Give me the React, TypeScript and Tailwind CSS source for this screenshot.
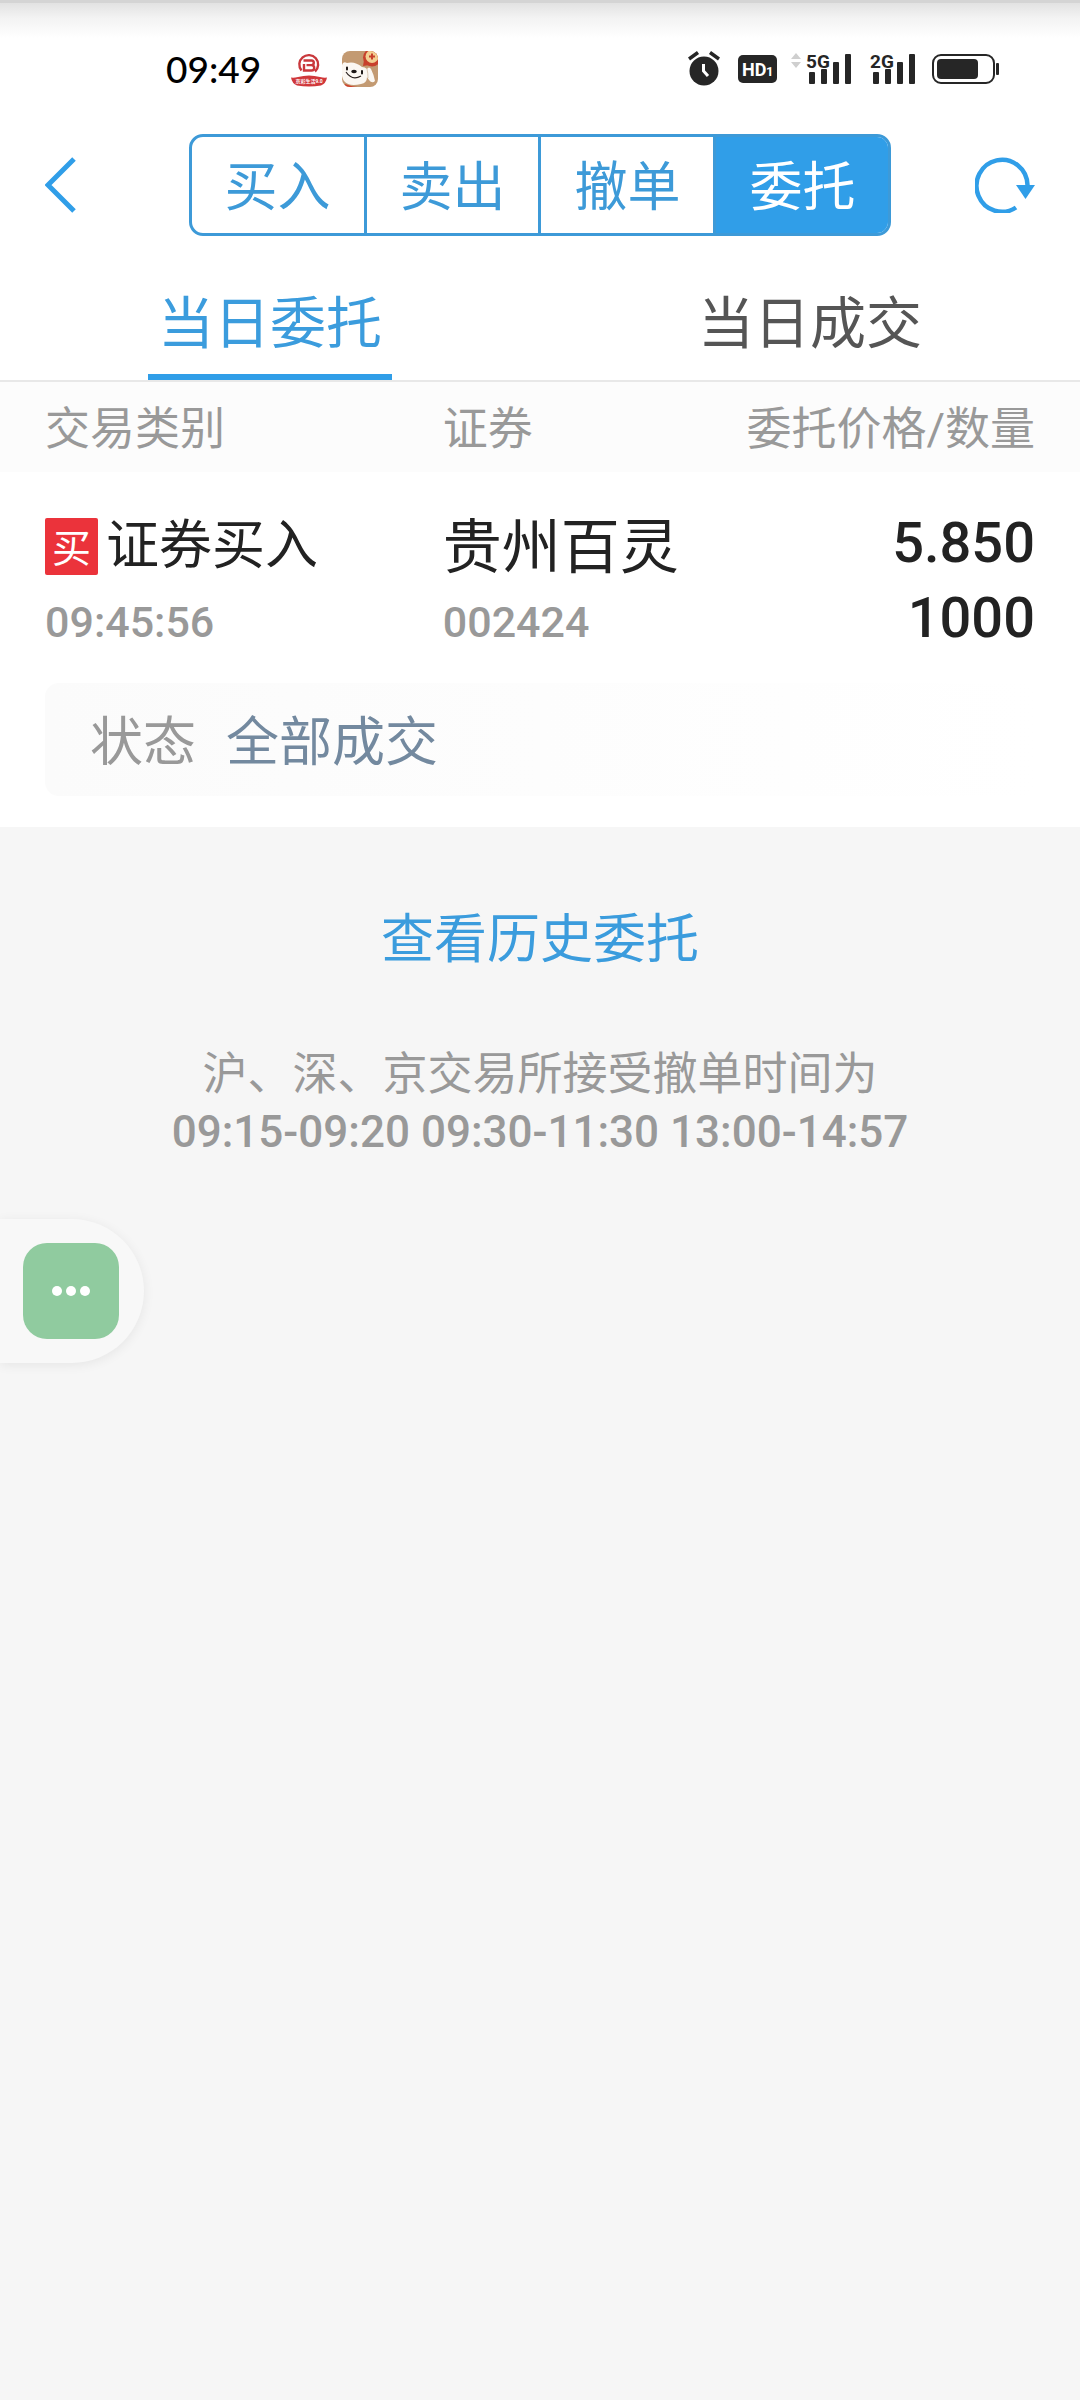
import React, { useState } from "react";

const SEGMENTS = ["买入", "卖出", "撤单", "委托"];
const TABS = ["当日委托", "当日成交"];

interface Order {
  side: string;
  type: string;
  time: string;
  name: string;
  code: string;
  price: string;
  quantity: string;
  status: string;
}

const orders: Order[] = [
  {
    side: "买",
    type: "证券买入",
    time: "09:45:56",
    name: "贵州百灵",
    code: "002424",
    price: "5.850",
    quantity: "1000",
    status: "全部成交",
  },
];

const BankAppIcon = () => (
  <svg className="w-9 h-9" viewBox="0 0 36 36" aria-hidden="true">
    <path d="M10.500 19.500A9.400 9.400 0 1 1 24 20.500" fill="none" stroke="#c9383c" strokeWidth="2.400" />
    <path d="M12.500 9.500h8a2.300 2.300 0 0 1 0 4.600h-5M20.500 14.100a2.700 2.700 0 0 1 0 5.400H13V13" fill="none" stroke="#c9383c" strokeWidth="2.400" />
    <path d="M0 26.500q3 .5 7-.5q11-3 22 0q4 1 7 .5q-1 6-6 8q-12 2-24 0q-5-2-6-8z" fill="#d0383b" />
    <text x="18" y="32" fontSize="5" fontWeight="700" textAnchor="middle" fill="#fff">
      京彩生活9.0
    </text>
  </svg>
);

const ShopAppIcon = () => (
  <svg className="w-9 h-9" viewBox="0 0 36 36" aria-hidden="true">
    <defs>
      <clipPath id="shop-clip">
        <rect width="36" height="36" rx="8" />
      </clipPath>
    </defs>
    <g clipPath="url(#shop-clip)">
      <rect width="36" height="36" fill="#c39a72" />
      <circle cx="30" cy="6.500" r="9" fill="#c8402c" />
      <path d="M22 9l-1 6 7-1z" fill="#c8402c" />
      <circle cx="30" cy="5.500" r="6.500" fill="#f2cf92" />
      <path d="M30 2.500v6M27 5.500h6" stroke="#c8402c" strokeWidth="2" />
      <path d="M3 33q8 3 13 3H2z" fill="#d0402c" />
      <path d="M0 14q1-4 5-2q8-2 15 4q3 0 5 2q2-3 4 0q3 6 4 12q-3 3-6-1l-2-3q0 6-6 7q-12 3-17-3q-3-5-2-10z" fill="#fbf7f2" />
      <path d="M25 18q1 4 1 9" fill="none" stroke="#d8c6b2" strokeWidth="1" />
      <path d="M4 21q6 9 15 4" fill="none" stroke="#2b2220" strokeWidth="1.200" />
      <path d="M5 16.500v2M20 20v2.500" stroke="#1c1716" strokeWidth="2" strokeLinecap="round" />
      <ellipse cx="12" cy="20.500" rx="2.800" ry="1.800" fill="#1c1716" />
    </g>
  </svg>
);

const AlarmIcon = () => (
  <svg className="w-8 h-9" viewBox="0 0 32 36" aria-hidden="true">
    <circle cx="16" cy="20" r="14.500" fill="#262626" />
    <path d="M1 8l9-6.500M31 8l-9-6.500" stroke="#262626" strokeWidth="3.500" />
    <path d="M15.500 13v7l4.500 5" fill="none" stroke="#fff" strokeWidth="3" />
  </svg>
);

const HdIcon = () => (
  <svg className="w-10 h-7" viewBox="0 0 40 28" aria-hidden="true">
    <rect width="39" height="28" rx="5" fill="#262626" />
    <text x="4" y="21" fontSize="18" fontWeight="700" fill="#fff" fontFamily="Roboto, sans-serif">
      HD
    </text>
    <text x="28" y="21" fontSize="13" fontWeight="700" fill="#fff" fontFamily="Roboto, sans-serif">
      1
    </text>
  </svg>
);

const SignalIcon = ({ label }: { label: string }) => (
  <svg className="w-12 h-9" viewBox="0 0 48 36" aria-hidden="true">
    <text x="0" y="17" fontSize="19" fontWeight="700" fill="#262626" fontFamily="Roboto, sans-serif">
      {label}
    </text>
    <g fill="#262626">
      <rect x="3" y="21" width="6" height="12" rx="1" />
      <rect x="15" y="18" width="6" height="15" rx="1" />
      <rect x="27" y="11" width="6" height="22" rx="1" />
      <rect x="39" y="3" width="6" height="30" rx="1" />
    </g>
  </svg>
);

const DataArrows = () => (
  <svg className="w-3 h-4" viewBox="0 0 12 16" aria-hidden="true">
    <path d="M6 0l5 6H1zM6 15l5-6H1z" fill="#cfcfcf" />
  </svg>
);

const BatteryIcon = () => (
  <svg className="w-[68px] h-8" viewBox="0 0 68 32" aria-hidden="true">
    <rect x="1" y="2" width="61" height="28" rx="8" fill="none" stroke="#262626" strokeWidth="2" />
    <rect x="5" y="6" width="41" height="20" rx="4" fill="#262626" />
    <rect x="64" y="10" width="3" height="12" rx="1" fill="#262626" />
  </svg>
);

const StatusBar = () => (
  <div className="flex h-[120px] items-start justify-between bg-[linear-gradient(#d4d4d4_3px,#e2e2e2_3px,#f3f3f3_18px,#ffffff_38px)] pt-[51px] pl-[166px] pr-20">
    <div className="flex h-9 items-center">
      <span className="font-['Lato'] text-[37px] leading-9 font-medium text-black">09:49</span>
      <span className="ml-[30px] flex gap-[15px]">
        <BankAppIcon />
        <ShopAppIcon />
      </span>
    </div>
    <div className="flex h-9 items-center">
      <AlarmIcon />
      <span className="ml-[18px]">
        <HdIcon />
      </span>
      <span className="ml-3 mb-4">
        <DataArrows />
      </span>
      <span className="ml-1">
        <SignalIcon label="5G" />
      </span>
      <span className="ml-4">
        <SignalIcon label="2G" />
      </span>
      <span className="ml-3.5">
        <BatteryIcon />
      </span>
    </div>
  </div>
);

const App: React.FC = () => {
  const [segment, setSegment] = useState("委托");
  const [tab, setTab] = useState("当日委托");

  return (
    <div className="relative min-h-screen bg-[#f6f6f6] font-['Roboto','Noto_Sans_CJK_SC',sans-serif]">
      <header className="bg-white">
        <StatusBar />

        <div className="flex items-center justify-between px-[45px] pt-3.5">
          <button type="button" aria-label="返回" className="w-[60px]">
            <svg className="w-8 h-14" viewBox="0 0 32 56" fill="none">
              <path d="M29 2L3 28l26 26" stroke="#309ee8" strokeWidth="5" />
            </svg>
          </button>

          <nav className="flex h-[102px] w-[71%] overflow-hidden rounded-[14px] border-3 border-[#3d9ad8]">
            {SEGMENTS.map((item) => (
              <button
                key={item}
                type="button"
                onClick={() => setSegment(item)}
                className={
                  item === segment
                    ? "flex-1 bg-[#309ee8] pt-1.5 text-[53px] leading-[90px] text-white"
                    : "flex-1 border-r-3 border-[#3d9ad8] pt-1.5 text-[53px] leading-[90px] text-[#3d9ad8]"
                }
              >
                {item}
              </button>
            ))}
          </nav>

          <button type="button" aria-label="刷新" className="w-[60px]">
            <svg className="w-[60px] h-14" viewBox="0 0 60 56" fill="none">
              <path d="M41 50.500A25.500 26 0 1 1 52.500 28" stroke="#309ee8" strokeWidth="4.500" />
              <path d="M41 28h19l-9.500 14z" fill="#309ee8" />
            </svg>
          </button>
        </div>

        <div className="mt-[30px] flex border-b-2 border-[#e8e8e8]" role="tablist">
          {TABS.map((item) => (
            <div key={item} className="flex flex-1 justify-center">
              <button
                type="button"
                role="tab"
                aria-selected={item === tab}
                onClick={() => setTab(item)}
                className={
                  item === tab
                    ? "h-[114px] w-[244px] border-b-6 border-[#309ee8] pt-2 text-[56px] leading-[100px] text-[#3b9cdd]"
                    : "h-[114px] w-[244px] border-b-6 border-transparent pt-2 text-[56px] leading-[100px] text-[#555555]"
                }
              >
                {item}
              </button>
            </div>
          ))}
        </div>
      </header>

      <main>
        <table className="w-full table-fixed bg-white">
          <thead>
            <tr className="h-[90px] bg-[#fcfcfc] text-[45px] leading-[60px] text-[#999999]">
              <th scope="col" className="w-[41%] pt-1.5 pl-[45px] text-left font-normal">交易类别</th>
              <th scope="col" className="w-[24%] pt-1.5 text-left font-normal">证券</th>
              <th scope="col" className="pt-1.5 pr-[45px] text-right font-normal">委托价格/数量</th>
            </tr>
          </thead>
          {orders.map((order) => (
            <tbody key={order.time}>
              <tr className="align-top text-[#222222]">
                <td className="pt-[34px] pl-[45px]">
                  <div className="flex h-20 items-center gap-2">
                    <span className="flex h-[57px] w-[53px] items-center justify-center rounded-xs bg-[#eb333b] pt-1.5 text-[39px] leading-none text-white">
                      {order.side}
                    </span>
                    <span className="text-[53px] leading-[76px]">{order.type}</span>
                  </div>
                  <div className="text-[43px] leading-[72px] font-medium text-[#999999]">{order.time}</div>
                </td>
                <td className="pt-[34px]">
                  <div className="text-[59px] leading-[84px]">{order.name}</div>
                  <div className="text-[43px] leading-[64px] font-medium text-[#999999]">{order.code}</div>
                </td>
                <td className="pt-[34px] pr-[45px] text-right text-[56px] leading-[75px] font-medium">
                  <div>{order.price}</div>
                  <div>{order.quantity}</div>
                </td>
              </tr>
              <tr>
                <td colSpan={3} className="px-[45px] pt-[25px] pb-[31px]">
                  <div className="flex gap-[30px] rounded-[14px] bg-linear-to-r from-[#fbfbfb] to-white px-[45px] pt-2 text-[53px] leading-[105px]">
                    <span className="text-[#999999]">状态</span>
                    <span className="text-[#73899f]">{order.status}</span>
                  </div>
                </td>
              </tr>
            </tbody>
          ))}
        </table>

        <div className="flex flex-col items-center pt-[73px] text-center">
          <a href="#history" className="text-[53px] leading-[80px] text-[#3b9cdd]">
            查看历史委托
          </a>
          <p className="mt-[66px] text-[45px] leading-[57px] text-[#999999]">
            沪、深、京交易所接受撤单时间为
            <br />
            <span className="text-[44px] font-medium">09:15-09:20 09:30-11:30 13:00-14:57</span>
          </p>
        </div>
      </main>

      {/* 悬浮消息入口 */}
      <button
        type="button"
        aria-label="消息"
        className="absolute top-[1219px] left-0 flex h-36 w-36 items-center rounded-r-full bg-[#f8f8f8] pl-[23px] shadow-[0_2px_12px_rgba(0,0,0,0.07)]"
      >
        <span className="flex size-24 items-center justify-center gap-1 rounded-3xl bg-[#90cb9f]">
          <span className="size-2.5 rounded-full bg-white" />
          <span className="size-2.5 rounded-full bg-white" />
          <span className="size-2.5 rounded-full bg-white" />
        </span>
      </button>
    </div>
  );
};

export default App;
